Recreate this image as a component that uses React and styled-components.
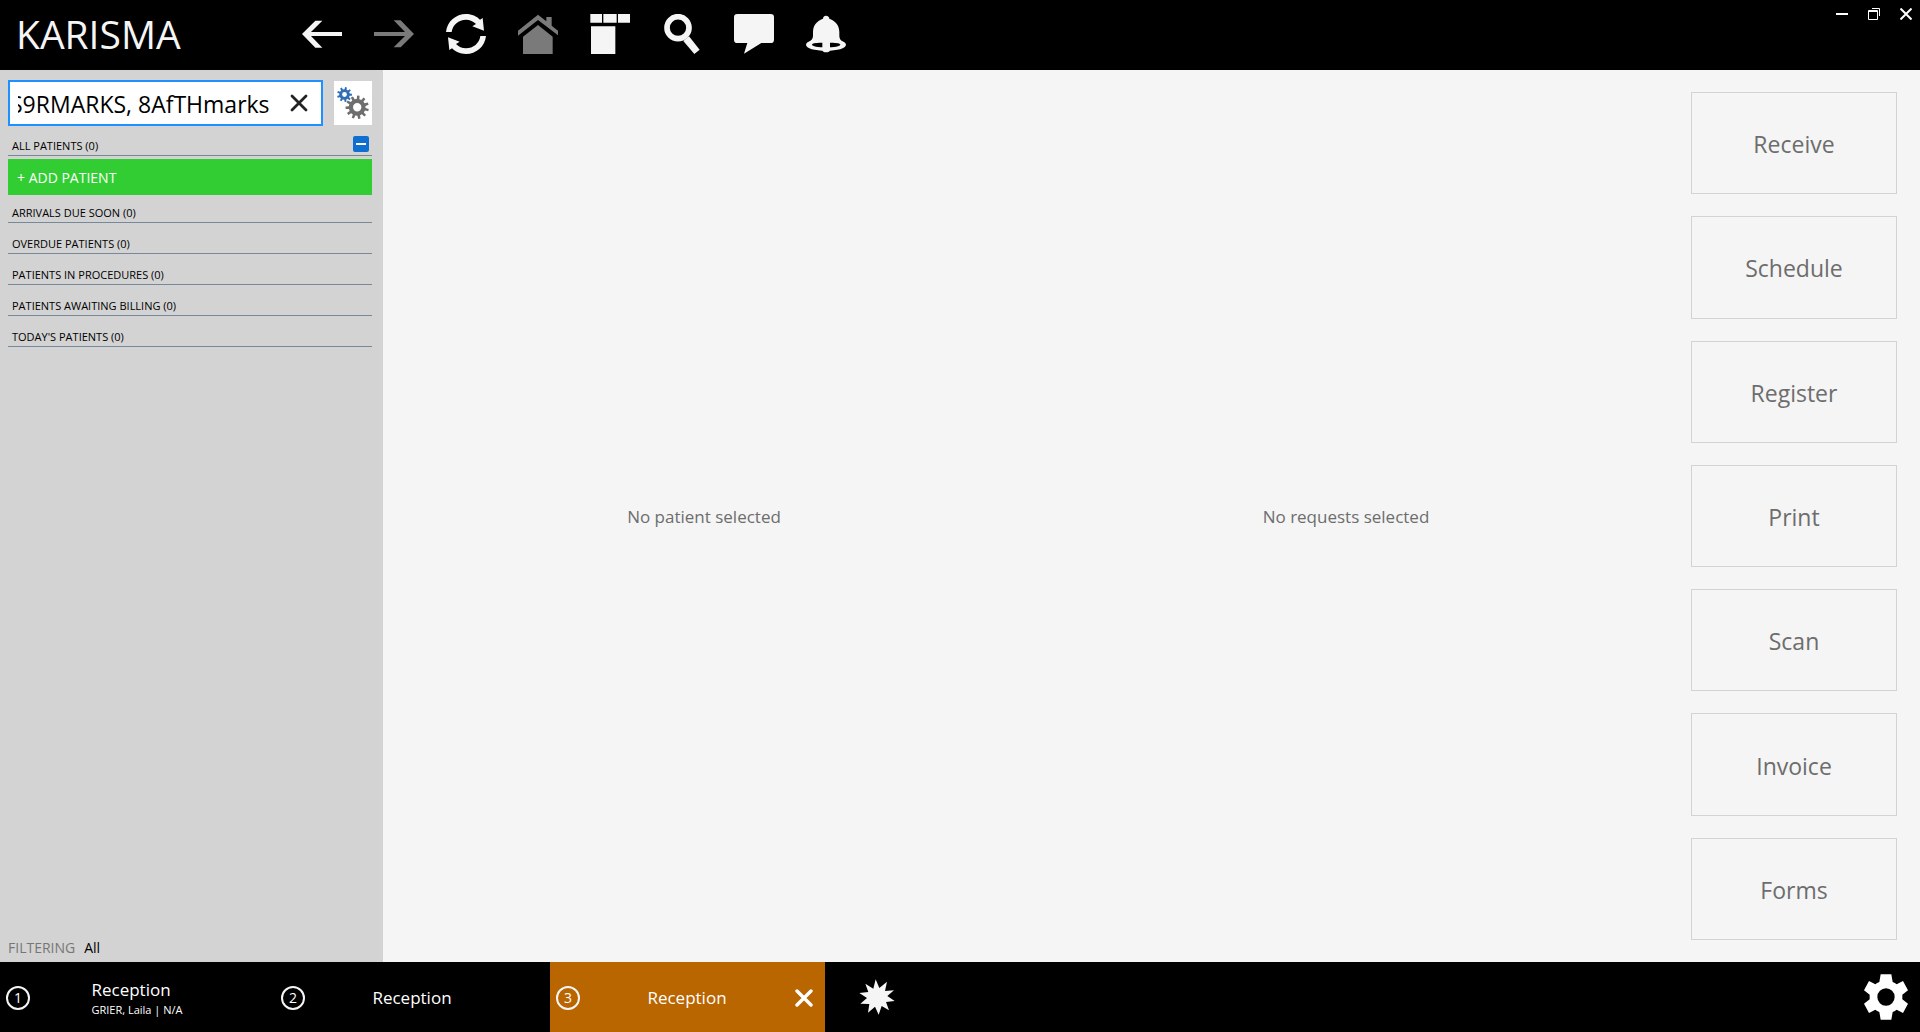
import React, { useLayoutEffect, useRef } from "react";
import styled, { createGlobalStyle } from "styled-components";

const GlobalStyle = createGlobalStyle`
  *, *::before, *::after { box-sizing: border-box; }
  body { margin: 0; background: #f5f5f5; }
  body, button, input { font-family: "Segoe UI", "Open Sans", "Noto Sans", sans-serif; }
`;

const Screen = styled.div`
  display: flex;
  flex-direction: column;
  height: 100vh;
  overflow: hidden;
`;

const PlainButton = styled.button`
  display: flex;
  align-items: center;
  justify-content: center;
  margin: 0;
  padding: 0;
  border: 0;
  background: transparent;
  color: inherit;
  cursor: pointer;
`;

/* Header */

const Header = styled.header`
  display: flex;
  flex: 0 0 70px;
  align-items: center;
  padding: 0 0 2px 16px;
  background: #000;
  color: #f5f5f5;
`;

const Brand = styled.h1`
  flex: 0 0 286px;
  margin: 0;
  font-size: 39px;
  line-height: 46px;
  font-weight: 400;
`;

const Nav = styled.nav`
  display: flex;
  flex: 1;
  gap: 32px;
`;

const NavButton = styled(PlainButton)`
  width: 40px;
  height: 40px;
  color: ${(p) => (p.disabled ? "#7a7a7a" : "#f5f5f5")};
`;

const WindowControls = styled.div`
  display: flex;
  align-self: flex-start;
  gap: 20px;
  padding: 8px 8px 0 0;
`;

const WindowButton = styled(PlainButton)`
  width: 12px;
  height: 12px;
`;

/* Body */

const Body = styled.div`
  display: flex;
  flex: 1;
  min-height: 0;
`;

const Sidebar = styled.aside`
  display: flex;
  flex: 0 0 383px;
  min-width: 0;
  flex-direction: column;
  justify-content: space-between;
  padding: 10px 11px 2px 8px;
  background: #d3d3d3;
`;

const SearchRow = styled.div`
  display: flex;
  align-items: center;
  gap: 11px;
  margin-bottom: 10px;
`;

const SearchBox = styled.div`
  display: flex;
  flex: 1;
  min-width: 0;
  height: 46px;
  padding: 0 13px 0 8px;
  align-items: center;
  gap: 20px;
  border: 2px solid #1e90ff;
  background: #fff;
`;

const SearchInput = styled.input`
  flex: 1;
  min-width: 0;
  height: 36px;
  padding: 2px 0 0;
  border: 0;
  outline: 0;
  background: transparent;
  color: #000;
  font-size: 23px;
`;

const ClearButton = styled(PlainButton)`
  flex: 0 0 18px;
  height: 18px;
  color: #222;
`;

const OptionsButton = styled(PlainButton)`
  flex: 0 0 38px;
  height: 44px;
  background: #fff;
`;

const Groups = styled.div`
  display: flex;
  flex-direction: column;
  gap: 8px;
`;

const Group = styled.section`
  display: flex;
  flex-direction: column;
  gap: 3px;
  padding-bottom: ${(p) => (p.$open ? "0" : "3px")};
`;

const GroupHeader = styled.div`
  display: flex;
  height: 20px;
  justify-content: space-between;
  padding: 0 3px 0 4px;
  border-bottom: 1px solid #778899;
`;

const GroupTitle = styled.h2`
  margin: 0;
  font-size: 11px;
  line-height: 19px;
  font-weight: 400;
  color: #000;
`;

const CollapseButton = styled(PlainButton)`
  width: 16px;
  height: 16px;
  border-radius: 2px;
  background: #0f6fd1;
  color: #fff;
`;

const AddPatient = styled(PlainButton)`
  height: 36px;
  justify-content: flex-start;
  padding-left: 9px;
  background: #32cd32;
  color: #fff;
  font-size: 14px;
`;

const Filtering = styled.div`
  display: flex;
  gap: 9px;
  font-size: 14px;
  line-height: 24px;
  color: #000;
`;

const FilterLabel = styled.span`
  color: #767676;
`;

const Main = styled.main`
  display: flex;
  flex: 1;
  background: #f5f5f5;
`;

const EmptyPane = styled.section`
  display: flex;
  flex: 1;
  align-items: center;
  justify-content: center;
  color: #6d6d6d;
  font-size: 17px;
`;

const Actions = styled.div`
  display: flex;
  flex: 0 0 253px;
  flex-direction: column;
  gap: 22px;
  padding: 22px 23px 22px 24px;
`;

const ActionButton = styled(PlainButton)`
  flex: 1;
  padding-top: 2px;
  border: 1px solid #d3d3d3;
  color: #6d6d6d;
  font-size: 23px;
`;

/* Footer */

const Footer = styled.footer`
  display: flex;
  flex: 0 0 70px;
  background: #000;
  color: #fff;
`;

const Tab = styled.div`
  display: flex;
  flex: 0 0 275px;
  align-items: center;
  padding-top: 2px;
  background: ${(p) => (p.$active ? "#b96500" : "transparent")};
`;

const TabButton = styled(PlainButton)`
  flex: 1;
  align-self: stretch;
  padding-left: 6px;
`;

const TabNumber = styled.span`
  flex: 0 0 24px;
  height: 24px;
  border: 2px solid #f5f5f5;
  border-radius: 50%;
  font-size: 14px;
  line-height: 20px;
  text-align: center;
`;

const TabLabel = styled.span`
  display: flex;
  flex: 1;
  justify-content: center;
  text-align: left;
  font-size: 17px;
  line-height: 24px;
`;

const TabDetail = styled.span`
  display: block;
  font-size: 11px;
  line-height: 16px;
`;

const TabEnd = styled.div`
  flex: 0 0 31px;
`;

const TabClose = styled(PlainButton)`
  width: 20px;
  height: 20px;
`;

const NewTab = styled(PlainButton)`
  width: 104px;
  color: #f5f5f5;
`;

const SettingsButton = styled(PlainButton)`
  width: 68px;
  margin-left: auto;
`;

/* Icons */

function NavIcon({ children }) {
  return (
    <svg width="40" height="40" viewBox="0 0 120 120" fill="currentColor" aria-hidden="true">
      {children}
    </svg>
  );
}

const ARROW = "M0 60L40 20H61L27 54H120V66H27L61 101H40Z";
const CYCLE =
  "M0 54C3 22 30 0 60 0C78 0 92 7 102 17L110 12L114 50L79 37L90 30C82 22 72 17 60 17C38 17 20 32 17 54Z";

const navItems = [
  { label: "Back", icon: <path d={ARROW} /> },
  { label: "Forward", disabled: true, icon: <path d={ARROW} transform="rotate(180 60 60)" /> },
  {
    label: "Refresh",
    icon: (
      <>
        <path d={CYCLE} />
        <path d={CYCLE} transform="rotate(180 60 60)" />
      </>
    ),
  },
  {
    label: "Home",
    disabled: true,
    icon: (
      <>
        <path d="M60 2L0 50V65L60 18L120 64V50L101 35V9H85V22Z" />
        <path d="M15 120V68L60 33L104 68V120Z" />
      </>
    ),
  },
  {
    label: "Layout",
    icon: <path d="M1 0H36V26H1ZM40 0H80V26H40ZM84 0H120V26H84ZM3 37H76V120H3Z" />,
  },
  {
    label: "Search",
    icon: (
      <>
        <circle cx="48" cy="41" r="33" fill="none" stroke="currentColor" strokeWidth="17" />
        <path d="M64 81L81 67L113 107L97 120Z" />
      </>
    ),
  },
  {
    label: "Messages",
    icon: <path d="M10 0H110Q120 0 120 10V77Q120 87 110 87H82L30 119L40 87H10Q0 87 0 77V10Q0 0 10 0Z" />,
  },
  {
    label: "Alerts",
    icon: (
      <>
        <path d="M60 5C66 5 70 9 70 14C90 21 100 36 100 54V66C100 74 104 80 112 84C100 90 20 90 8 84C16 80 21 74 21 66V54C21 36 31 21 51 14C51 9 54 5 60 5Z" />
        <path
          fillRule="evenodd"
          d="M60 76C96 76 120 82 120 92C120 103 94 110 60 110C26 110 0 103 0 92C0 82 26 76 60 76ZM60 86C34 86 18 88 18 92C18 97 36 100 60 100C84 100 103 97 103 92C103 88 86 86 60 86Z"
        />
        <path d="M18 91C24 86 40 86 60 86C80 86 97 86 103 91C92 97 78 98 60 98C42 98 29 97 18 91Z" fill="#000" />
        <path d="M49 84H72V108C72 113 67 115 60 115C54 115 49 113 49 108Z" />
      </>
    ),
  },
];

function Cross({ size, weight }) {
  return (
    <svg width={size} height={size} viewBox="0 0 18 18" aria-hidden="true">
      <path d="M2 2L16 16M16 2L2 16" stroke="currentColor" strokeWidth={weight} strokeLinecap="round" fill="none" />
    </svg>
  );
}

function cogPath(cx, cy, teeth, outer, root, hole, turn = 0) {
  const step = (Math.PI * 2) / teeth;
  const at = (r, a) => `${(cx + r * Math.sin(a)).toFixed(2)} ${(cy - r * Math.cos(a)).toFixed(2)}`;
  const points = [];
  for (let i = 0; i < teeth; i += 1) {
    const a = i * step + turn;
    points.push(at(root, a - step * 0.28), at(outer, a - step * 0.18), at(outer, a + step * 0.18), at(root, a + step * 0.28));
  }
  const ring = `M${cx - hole} ${cy}a${hole} ${hole} 0 1 0 ${hole * 2} 0a${hole} ${hole} 0 1 0 ${-hole * 2} 0Z`;
  return `M${points.join("L")}Z${ring}`;
}

function OptionsIcon() {
  return (
    <svg width="38" height="44" viewBox="0 0 38 44" fillRule="evenodd" aria-hidden="true">
      <path d={cogPath(10.5, 13.5, 9, 7.5, 5.3, 2.4, 0.2)} fill="#2f6fb5" />
      <path d={cogPath(23.2, 26.3, 11, 11.7, 8.4, 4.2, 0.1)} fill="#6e6e6e" />
    </svg>
  );
}

function BurstIcon() {
  return (
    <svg width="36" height="36" viewBox="0 0 108 108" fill="currentColor" aria-hidden="true">
      <path d="M50 1L61 27L84 8L78 36L105 34L85 51L107 66L81 69L90 94L68 81L59 107L48 83L27 101L31 75L4 74L24 57L1 42L28 39L19 14L43 29Z" />
    </svg>
  );
}

function SettingsIcon() {
  return (
    <svg width="44" height="46" viewBox="0 0 132 138" fill="currentColor" fillRule="evenodd" aria-hidden="true">
      <path d="M50 1H82L86 24Q93 27 98 31L117 21L132 49L115 62V76L132 89L117 117L98 107Q93 111 86 114L82 137H50L46 114Q39 111 34 107L15 117L0 89L17 76V62L0 49L15 21L34 31Q39 27 46 24ZM66 43A26 26 0 1 0 66 95A26 26 0 1 0 66 43Z" />
    </svg>
  );
}

const groups = [
  { title: "ALL PATIENTS (0)", open: true },
  { title: "ARRIVALS DUE SOON (0)" },
  { title: "OVERDUE PATIENTS (0)" },
  { title: "PATIENTS IN PROCEDURES (0)" },
  { title: "PATIENTS AWAITING BILLING (0)" },
  { title: "TODAY'S PATIENTS (0)" },
];

const actions = ["Receive", "Schedule", "Register", "Print", "Scan", "Invoice", "Forms"];

const tabs = [
  { number: 1, name: "Reception", detail: "GRIER, Laila | N/A" },
  { number: 2, name: "Reception" },
  { number: 3, name: "Reception", active: true },
];

function PatientSearch() {
  const input = useRef(null);
  useLayoutEffect(() => {
    const showEnd = () => {
      if (input.current) input.current.scrollLeft = input.current.scrollWidth;
    };
    showEnd();
    document.fonts?.ready.then(showEnd);
  }, []);
  return (
    <SearchBox>
      <SearchInput ref={input} type="text" aria-label="Search patients" defaultValue="S9RMARKS, 8AfTHmarks" />
      <ClearButton aria-label="Clear search">
        <Cross size={18} weight={2.8} />
      </ClearButton>
    </SearchBox>
  );
}

export default function App() {
  return (
    <Screen>
      <GlobalStyle />
      <Header>
        <Brand>KARISMA</Brand>
        <Nav aria-label="Main">
          {navItems.map((item) => (
            <NavButton key={item.label} aria-label={item.label} disabled={item.disabled}>
              <NavIcon>{item.icon}</NavIcon>
            </NavButton>
          ))}
        </Nav>
        <WindowControls>
          <WindowButton aria-label="Minimize">
            <svg width="12" height="12" aria-hidden="true">
              <path d="M0 5H12V7H0Z" fill="#fff" />
            </svg>
          </WindowButton>
          <WindowButton aria-label="Restore">
            <svg width="12" height="12" fill="none" stroke="#fff" aria-hidden="true">
              <path d="M0.5 2.5H9.5V11.5H0.5ZM0 3.5H10M4 0.5H11.5V8" />
            </svg>
          </WindowButton>
          <WindowButton aria-label="Close">
            <svg width="12" height="12" fill="none" stroke="#fff" strokeWidth="2" aria-hidden="true">
              <path d="M0.5 0.5L11.5 11.5M11.5 0.5L0.5 11.5" />
            </svg>
          </WindowButton>
        </WindowControls>
      </Header>

      <Body>
        <Sidebar>
          <div>
            <SearchRow>
              <PatientSearch />
              <OptionsButton aria-label="Search options">
                <OptionsIcon />
              </OptionsButton>
            </SearchRow>
            <Groups>
              {groups.map((group) => (
                <Group key={group.title} $open={group.open}>
                  <GroupHeader>
                    <GroupTitle>{group.title}</GroupTitle>
                    {group.open && (
                      <CollapseButton aria-label="Collapse">
                        <svg width="10" height="2" aria-hidden="true">
                          <path d="M0 0H10V2H0Z" fill="currentColor" />
                        </svg>
                      </CollapseButton>
                    )}
                  </GroupHeader>
                  {group.open && <AddPatient>+ ADD PATIENT</AddPatient>}
                </Group>
              ))}
            </Groups>
          </div>
          <Filtering>
            <FilterLabel>FILTERING</FilterLabel>
            <span>All</span>
          </Filtering>
        </Sidebar>

        <Main>
          <EmptyPane>No patient selected</EmptyPane>
          <EmptyPane>No requests selected</EmptyPane>
          <Actions>
            {actions.map((action) => (
              <ActionButton key={action}>{action}</ActionButton>
            ))}
          </Actions>
        </Main>
      </Body>

      <Footer>
        {tabs.map((tab) => (
          <Tab key={tab.number} $active={tab.active}>
            <TabButton>
              <TabNumber>{tab.number}</TabNumber>
              <TabLabel>
                <span>
                  {tab.name}
                  {tab.detail && <TabDetail>{tab.detail}</TabDetail>}
                </span>
              </TabLabel>
            </TabButton>
            <TabEnd>
              {tab.active && (
                <TabClose aria-label="Close tab">
                  <Cross size={18} weight={3.4} />
                </TabClose>
              )}
            </TabEnd>
          </Tab>
        ))}
        <NewTab aria-label="New tab">
          <BurstIcon />
        </NewTab>
        <SettingsButton aria-label="Settings">
          <SettingsIcon />
        </SettingsButton>
      </Footer>
    </Screen>
  );
}
